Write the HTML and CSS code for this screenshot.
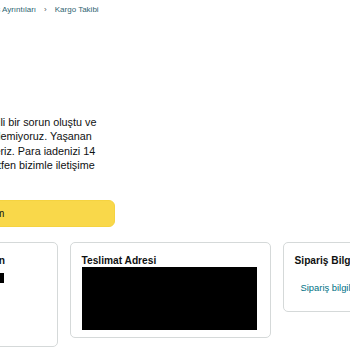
FILE: index.html
```html
<!DOCTYPE html>
<html lang="tr">
<head>
    <meta charset="UTF-8">
    <meta name="viewport" content="width=device-width, initial-scale=1.0">
    <title>Kargo Takibi</title>
    <link rel="stylesheet" href="styles.css">
</head>
<body>
    <div class="page">
        <nav class="breadcrumb">
            <a href="#">Hesabınız</a>
            <span class="sep">›</span>
            <a href="#">Siparişleriniz</a>
            <span class="sep">›</span>
            <a href="#">Sipariş Ayrıntıları</a>
            <span class="sep">›</span>
            <a href="#">Kargo Takibi</a>
        </nav>

        <h1 class="status-title">İade ediliyor</h1>

        <p class="notice">
            Paketinizin ulaştırılmasıyla ilgili bir sorun oluştu ve<br>
            paketinizi adresinize teslim edemiyoruz. Yaşanan<br>
            bu problemden ötürü özür dileriz. Para iadenizi 14<br>
            iş günü içinde alamazsanız lütfen bizimle iletişime<br>
            geçin.
        </p>

        <button class="btn-primary">Anladım</button>

        <div class="cards">
            <div class="card">
                <h3 class="card-title">Kargo Şirketi ve Teslim Alan</h3>
                <div class="redacted redacted-line"></div>
                <ul class="card-lines">
                    <li>Takip numarası</li>
                    <li>Son durum:</li>
                    <li>İade ediliyor</li>
                    <li>Tahmini iade: 14 gün</li>
                </ul>
            </div>

            <div class="card">
                <h3 class="card-title">Teslimat Adresi</h3>
                <div class="redacted redacted-address"></div>
            </div>

            <div class="card">
                <h3 class="card-title">Sipariş Bilgileri</h3>
                <ul class="card-links">
                    <li><a href="#">Sipariş bilgilerini görüntüle</a></li>
                </ul>
            </div>
        </div>
    </div>
</body>
</html>
```

FILE: styles.css
```css
body {
    margin: 0;
    font-family: "Liberation Sans", Arial, sans-serif;
    color: #0f1111;
    background-color: #fff;
    overflow: hidden;
}

/* the page column starts left of the visible window */
.page {
    width: 640px;
    margin-left: -143px;
    padding-top: 4px;
}

.breadcrumb {
    display: flex;
    font-size: 8px;
    line-height: 12px;
}

.breadcrumb a {
    color: #2f6572;
    text-decoration: none;
}

.breadcrumb .sep {
    margin: 0 8px;
    color: #565959;
}

.status-title {
    font-size: 18px;
    line-height: 24px;
    font-weight: 700;
    margin: 28px 0 0;
}

.notice {
    font-size: 10.8px;
    line-height: 14.4px;
    margin: 46.8px 0 0;
}

.btn-primary {
    display: block;
    width: 258px;
    height: 27px;
    margin-top: 13.2px;
    padding: 0;
    background-color: #f9d84a;
    border: 1px solid #f5d340;
    border-radius: 6px;
    font-family: inherit;
    font-size: 10px;
    color: #0f1111;
    cursor: pointer;
}

.cards {
    display: grid;
    grid-template-columns: repeat(3, 201px);
    gap: 12px;
    align-items: start;
    margin-top: 15px;
}

.card {
    border: 1px solid #d5d9d9;
    border-radius: 5px;
    padding: 11px 10.5px 7px;
}

.card-title {
    font-size: 10.2px;
    line-height: 13px;
    font-weight: 700;
    margin: 0;
}

.redacted {
    background-color: #000;
}

.redacted-line {
    width: 135px;
    height: 10px;
    margin-top: 5.6px;
}

.redacted-address {
    width: 175px;
    height: 63px;
}

.card-lines {
    list-style: none;
    margin: 4px 0 0;
    padding: 0;
    font-size: 9.4px;
    line-height: 13px;
    color: #565959;
}

.card-links {
    list-style: none;
    margin: 14px 0 9.5px;
    padding: 0 0 0 6px;
    font-size: 9.4px;
    line-height: 13px;
}

.card-links a {
    color: #007185;
    text-decoration: none;
}
```
